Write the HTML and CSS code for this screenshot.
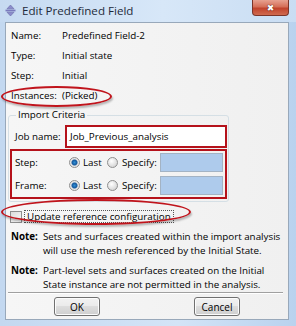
FILE: index.html
```html
<!DOCTYPE html>
<html lang="en">
<head>
  <meta charset="UTF-8">
  <meta name="viewport" content="width=device-width, initial-scale=1.0">
  <title>Edit Predefined Field</title>
  <link rel="stylesheet" href="styles.css">
</head>
<body>
  <div class="window">
    <div class="titlebar">
      <svg class="app-icon" width="11" height="11" viewBox="0 0 11 11">
        <path d="M5.5 0 L9 3.8 H2 Z M5.5 11 L9 7.2 H2 Z" fill="#8c8ccc" stroke="#6a6aa8" stroke-width="0.6"/>
        <rect x="0.5" y="4.6" width="10" height="1.8" fill="#7a7abd"/>
      </svg>
      <span class="title">Edit Predefined Field</span>
      <div class="close"><span>&#x2716;</span></div>
    </div>

    <div class="client">
      <div class="info">
        <span>Name:</span><span>Predefined Field-2</span>
        <span>Type:</span><span>Initial state</span>
        <span>Step:</span><span>Initial</span>
        <span>Instances:</span><span>(Picked)</span>
      </div>

      <fieldset class="group">
        <legend>Import Criteria</legend>
        <div class="job-row">
          <span class="job-label">Job name:</span>
          <div class="job-field">Job_Previous_analysis</div>
        </div>
        <div class="pick-box">
          <div class="pick-row">
            <span class="pick-label">Step:</span>
            <span class="radio on"></span><span class="opt-last">Last</span>
            <span class="radio"></span><span class="opt-spec">Specify:</span>
            <span class="spec-field"></span>
          </div>
          <div class="pick-row">
            <span class="pick-label">Frame:</span>
            <span class="radio on"></span><span class="opt-last">Last</span>
            <span class="radio"></span><span class="opt-spec">Specify:</span>
            <span class="spec-field"></span>
          </div>
        </div>
      </fieldset>

      <div class="check-row">
        <span class="check"></span>
        <span class="focus">Update reference configuration</span>
      </div>

      <div class="note">
        <b>Note:</b>
        <p>Sets and surfaces created within the import analysis<br>will use the mesh referenced by the Initial State.</p>
      </div>
      <div class="note">
        <b>Note:</b>
        <p>Part-level sets and surfaces created on the Initial<br>State instance are not permitted in the analysis.</p>
      </div>

      <div class="separator"></div>

      <div class="buttons">
        <button class="btn">OK</button>
        <button class="btn">Cancel</button>
      </div>
    </div>

    <!-- red annotation rings -->
    <div class="ring ring-instances"></div>
    <div class="ring ring-update"></div>
  </div>
</body>
</html>
```

FILE: styles.css
```css
body {
  margin: 0;
  font-family: "Open Sans", "Noto Sans", sans-serif;
  font-size: 9.8px;
  color: #000;
}
.window {
  position: relative;
  width: 296px;
  height: 326px;
  background: linear-gradient(to right, #c3d8f0, #d3e4f7 60%, #b9d2ee);
  overflow: hidden;
}
.titlebar {
  height: 22px;
  display: flex;
  align-items: center;
  padding-left: 5px;
  position: relative;
  background: linear-gradient(to right, #c6daf1, #d7e7f8 55%, #c9ddf3);
}
.app-icon {
  margin-right: 6px;
  margin-top: -1px;
}
.title {
  font-size: 11.6px;
  color: #1e2a3a;
  margin-top: -1px;
}
.close {
  position: absolute;
  right: 7px;
  top: 0;
  width: 35px;
  height: 15px;
  border: 1px solid #7b3529;
  border-top: none;
  border-radius: 0 0 4px 4px;
  background: linear-gradient(#e7a190, #d56f58 45%, #c1432c 55%, #cf6a4f);
  display: flex;
  align-items: center;
  justify-content: center;
}
.close span {
  color: #fff;
  font-size: 9px;
  font-family: "DejaVu Sans", sans-serif;
  text-shadow: 0 0 1px #5a2017, 0 0 1px #5a2017;
}
.client {
  margin: 0 7px 0 5px;
  height: 298px;
  border: 1px solid #98a8ba;
  background: linear-gradient(to right, #f6f6f6, #f0f0f0);
  padding: 2px 0 0 0;
  box-sizing: border-box;
}
.info {
  display: grid;
  grid-template-columns: 51px auto;
  grid-auto-rows: 20px;
  align-items: center;
  padding-left: 5px;
}
.group {
  margin: 3px 0 0 2px;
  width: 221px;
  box-sizing: border-box;
  border: 1px solid #d5dfe5;
  border-radius: 3px;
  padding: 1px 1px 2px 1px;
}
.group legend {
  padding: 0 2px;
  margin-left: 6px;
  line-height: 14px;
}
.job-row {
  display: flex;
  align-items: center;
  margin-top: 2px;
}
.job-label {
  width: 50px;
  padding-left: 5px;
}
.job-field {
  width: 155px;
  height: 19px;
  border: 2px solid #b5121b;
  background: #fff;
  padding-left: 3px;
  line-height: 19px;
}
.pick-box {
  border: 2px solid #b5121b;
  margin-top: 1px;
  padding: 0 0 2px 0;
}
.pick-row {
  display: flex;
  align-items: center;
  margin-top: 2px;
}
.pick-row + .pick-row {
  margin-top: 4px;
}
.pick-label {
  width: 54px;
  padding-left: 3px;
}
.radio {
  width: 9px;
  height: 9px;
  border-radius: 50%;
  border: 1px solid #8f8f8f;
  background: radial-gradient(circle at 40% 35%, #ffffff, #d9d9d9 70%);
  box-sizing: content-box;
}
.radio.on {
  background: radial-gradient(circle, #2f8fd6 0, #16589c 2.5px, #e2e2e2 3.5px, #f6f6f6 100%);
}
.opt-last {
  margin-left: 3px;
  width: 24px;
}
.opt-spec {
  margin-left: 4px;
  width: 38px;
}
.spec-field {
  width: 61px;
  height: 17px;
  background: #aecbec;
  border: 1px solid #a3b3c4;
}
.check-row {
  display: flex;
  align-items: center;
  margin: 8px 0 0 4px;
}
.check {
  width: 10px;
  height: 10px;
  border: 1px solid #8f8f8f;
  background: linear-gradient(135deg, #dcdcdc, #f8f8f8);
  margin-right: 2px;
}
.focus {
  border: 1px dotted #555;
  padding: 0 2px;
  line-height: 11px;
}
.note {
  display: flex;
  margin: 7px 0 0 5px;
  line-height: 14px;
}
.note + .note {
  margin-top: 6px;
}
.note b {
  width: 32px;
  flex-shrink: 0;
}
.note p {
  margin: 0;
}
.separator {
  margin: 0 5px 0 2px;
  border-top: 1px solid #a0a0a0;
  border-bottom: 1px solid #fff;
}
.buttons {
  display: flex;
  justify-content: space-between;
  padding: 3px 48px 0 48px;
}
.btn {
  width: 46px;
  height: 19px;
  padding: 0;
  font-family: inherit;
  font-size: 10px;
  border: 1px solid #707070;
  border-radius: 3px;
  background: linear-gradient(#f2f2f2, #ebebeb 45%, #dddddd 50%, #cfcfcf);
  box-shadow: inset 0 0 0 1px #fcfcfc;
  color: #000;
}
.ring {
  position: absolute;
  border: 2px solid #c0141c;
  border-radius: 50%;
  box-shadow: 1px 2px 2px rgba(0, 0, 0, 0.25);
}
.ring-instances {
  left: 1px;
  top: 86px;
  width: 107px;
  height: 17px;
}
.ring-update {
  left: 1px;
  top: 199px;
  width: 186px;
  height: 22px;
}
```
